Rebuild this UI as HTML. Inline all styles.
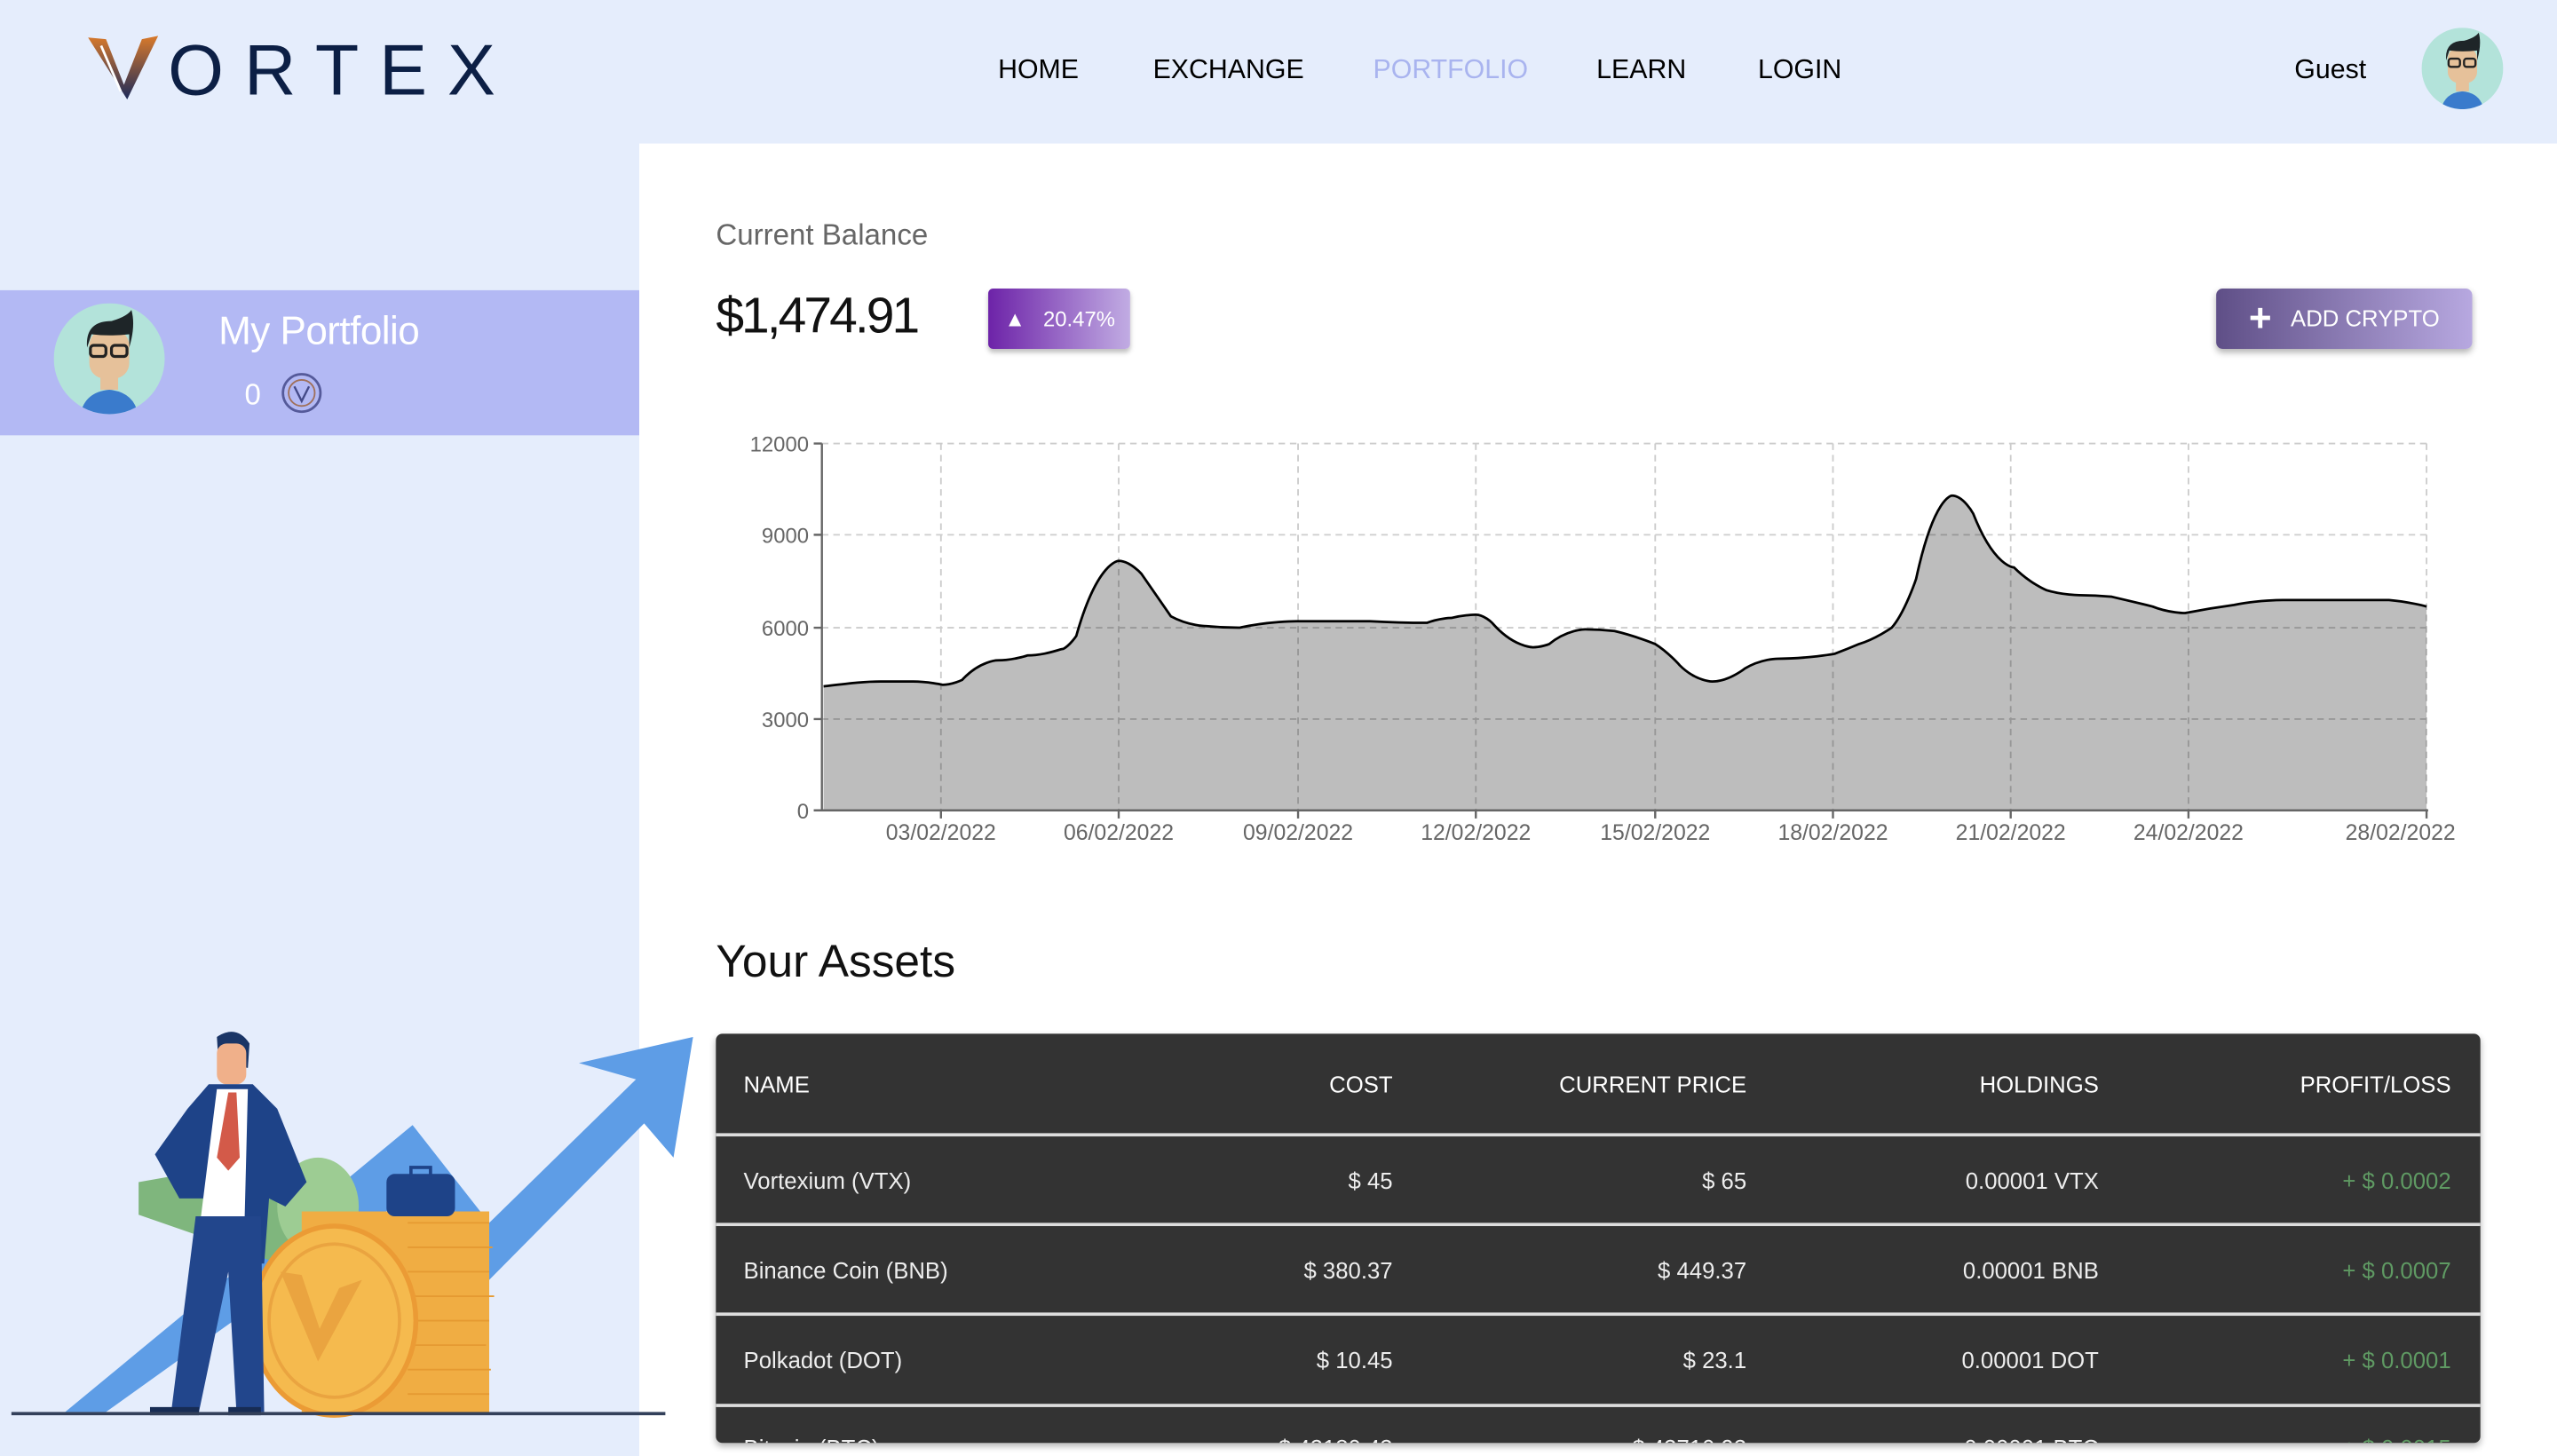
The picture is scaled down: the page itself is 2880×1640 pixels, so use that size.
<!DOCTYPE html>
<html><head><meta charset="utf-8"><style>
*{margin:0;padding:0;box-sizing:border-box}
html,body{width:2880px;height:1640px;overflow:hidden;background:#e5edfc;font-family:"Liberation Sans",sans-serif}
#w{position:absolute;left:0;top:0;width:1568px;height:893px;transform:scale(1.83674,1.83651);transform-origin:0 0;background:#e5edfc}
.a{position:absolute}
.nav{top:34px;font-size:16.5px;color:#000}
.main{left:392px;top:88px;width:1176px;height:805px;background:#fff}
.tb{left:439px;top:634px;width:1082px;height:251px;background:#333;border-radius:4px;overflow:hidden;box-shadow:0 2px 4px rgba(0,0,0,.3)}
.row{position:absolute;left:0;width:1082px;color:#eee;font-size:14px}
.row span{position:absolute;top:50%;transform:translateY(-50%)}
.sep{position:absolute;left:0;width:1082px;height:2px;background:#ddd}
</style></head><body><div id="w">
<svg class="a" style="left:54px;top:20px" width="270" height="44" viewBox="0 0 270 44">
<defs><linearGradient id="lg" x1="0" y1="0" x2="0" y2="1"><stop offset="0" stop-color="#d97a2b"/><stop offset="1" stop-color="#1c2a5a"/></linearGradient></defs>
<path d="M0 3 L11 4 L22 32 L33 4 L43 2 L24 41 Z" fill="url(#lg)"/><path d="M8 8 L20 36" stroke="#fff" stroke-width="1.5" fill="none"/>
<text x="49" y="38" font-family="Liberation Sans" font-size="44" fill="#0c1f45" letter-spacing="12.5">ORTEX</text>
</svg>
<div class="a nav" style="left:612px">HOME</div>
<div class="a nav" style="left:707px">EXCHANGE</div>
<div class="a nav" style="left:842px;color:#a9b4ef">PORTFOLIO</div>
<div class="a nav" style="left:979px">LEARN</div>
<div class="a nav" style="left:1078px">LOGIN</div>
<div class="a nav" style="left:1407px">Guest</div>
<svg class="a" style="left:1485px;top:17px" width="50" height="50" viewBox="0 0 50 50">
<circle cx="25" cy="25" r="25" fill="#b3e3da"/><clipPath id="c1"><circle cx="25" cy="25" r="25"/></clipPath>
<g clip-path="url(#c1)"><path d="M12 50 Q14 40 25 39 Q36 40 38 50Z" fill="#3a7bcc"/><rect x="21" y="30" width="8" height="9" fill="#e6c19a"/>
<rect x="16" y="12" width="18" height="22" rx="7" fill="#e6c19a"/><path d="M15 20 Q14 8 26 8 Q33 6 35 3 Q37 10 34 20 L34 14 Q25 15 17 14Z" fill="#1e2528"/>
<rect x="16.5" y="19" width="7" height="5" rx="1.5" fill="none" stroke="#222" stroke-width="1.3"/><rect x="26" y="19" width="7" height="5" rx="1.5" fill="none" stroke="#222" stroke-width="1.3"/></g></svg>
<div class="a" style="left:0;top:178px;width:392px;height:89px;background:#b3b9f4"></div>
<svg class="a" style="left:33px;top:186px" width="68" height="68" viewBox="0 0 50 50">
<circle cx="25" cy="25" r="25" fill="#b3e3da"/><clipPath id="c2"><circle cx="25" cy="25" r="25"/></clipPath>
<g clip-path="url(#c2)"><path d="M12 50 Q14 40 25 39 Q36 40 38 50Z" fill="#3a7bcc"/><rect x="21" y="30" width="8" height="9" fill="#e6c19a"/>
<rect x="16" y="12" width="18" height="22" rx="7" fill="#e6c19a"/><path d="M15 20 Q14 8 26 8 Q33 6 35 3 Q37 10 34 20 L34 14 Q25 15 17 14Z" fill="#1e2528"/>
<rect x="16.5" y="19" width="7" height="5" rx="1.5" fill="none" stroke="#222" stroke-width="1.3"/><rect x="26" y="19" width="7" height="5" rx="1.5" fill="none" stroke="#222" stroke-width="1.3"/></g></svg>
<div class="a" style="left:134px;top:190px;font-size:24px;color:#fff;letter-spacing:-0.3px">My Portfolio</div>
<div class="a" style="left:150px;top:232px;font-size:18px;color:#fff">0</div>
<svg class="a" style="left:172px;top:228px" width="26" height="26" viewBox="0 0 26 26"><circle cx="13" cy="13" r="11.5" fill="none" stroke="#555a9a" stroke-width="1.5"/><circle cx="13" cy="13" r="8" fill="none" stroke="#a0705a" stroke-width="1"/><path d="M8.5 9 L13 18 L17.5 9" fill="none" stroke="#444a88" stroke-width="1.3"/></svg>
<div class="a main"></div>
<svg class="a" style="left:0;top:600px" width="430" height="293" viewBox="0 0 430 293">
<path d="M40 266 L253 90 L300 150 L390 62 L355 52 L425 36 L413 110 L395 89 L300 185 L255 130 L65 266Z" fill="#5e9de6"/>
<path d="M85 125 L170 110 L200 150 L200 185 L85 145Z" fill="#7fb67d"/><ellipse cx="195" cy="140" rx="25" ry="30" fill="#9dcc93"/>
<rect x="185" y="143" width="115" height="124" fill="#f0ad43"/>
<g stroke="#e59a32" stroke-width="1">
<path d="M250 150H300M250 165H302M250 180H300M250 195H303M250 210H300M250 225H298M250 240H301M250 255H300"/></g>
<ellipse cx="205" cy="210" rx="50" ry="58" fill="#f5ba4e" stroke="#eb9b35" stroke-width="3"/>
<ellipse cx="205" cy="210" rx="40" ry="47" fill="none" stroke="#eaa440" stroke-width="2"/>
<path d="M172 180 L195 235 L222 185 L208 190 L196 215 L185 182Z" fill="#eaa440"/>
<rect x="237" y="120" width="42" height="26" rx="5" fill="#1e4388"/><rect x="252" y="116" width="12" height="6" fill="none" stroke="#1e4388" stroke-width="2"/>
<path d="M133 36 Q145 28 153 40 L152 55 L134 52Z" fill="#1a3566"/><rect x="133" y="40" width="18" height="25" rx="6" fill="#f0b08a"/>
<path d="M115 80 L128 65 L155 65 L170 80 L188 125 L175 140 L165 135 L162 175 L135 175 L128 135 L110 135 L95 108Z" fill="#1e4388"/>
<path d="M133 68 L152 68 L150 148 L123 148Z" fill="#fff"/><path d="M140 70 L145 70 L147 110 L140 118 L133 110Z" fill="#d35a49"/>
<path d="M120 146 L160 146 L162 266 L145 266 L140 180 L122 266 L105 266Z" fill="#22468c"/>
<path d="M92 263 L122 263 L122 268 L92 268Z M140 263 L160 263 L160 268 L140 268Z" fill="#172c54"/>
<rect x="7" y="266" width="401" height="2" fill="#33405a"/>
</svg>
<div class="a" style="left:439px;top:134px;font-size:18px;color:#666">Current Balance</div>
<div class="a" style="left:439px;top:176px;font-size:31px;color:#111;letter-spacing:-1.6px">$1,474.91</div>
<div class="a" style="left:606px;top:177px;width:87px;height:37px;border-radius:3px;background:linear-gradient(90deg,#6d23a8,#c1ace3);box-shadow:0 2px 3px rgba(0,0,0,.25);color:#fff;font-size:13px;line-height:37px;padding-left:10px">&#9650;&nbsp;&nbsp;&nbsp;20.47%</div>
<div class="a" style="left:1359px;top:177px;width:157px;height:37px;border-radius:4px;background:linear-gradient(90deg,#5f4f87,#b7a8e0);box-shadow:0 2px 4px rgba(0,0,0,.3);color:#fff;font-size:14px;line-height:37px;padding-left:20px"><span style="font-size:24px;vertical-align:-3px;font-weight:bold">+</span>&nbsp;&nbsp;&nbsp;ADD CRYPTO</div>
<svg class="a" style="left:440px;top:260px" width="1090" height="270" viewBox="440 260 1090 270">
<g stroke="#ccc" stroke-dasharray="4 3" stroke-width="1">
<path d="M504 272H1488M504 328H1488M504 385H1488M504 441H1488"/>
<path d="M577 272V497M686 272V497M796 272V497M905 272V497M1015 272V497M1124 272V497M1233 272V497M1342 272V497M1488 272V497"/></g>
<path d="M505 421 C522 419 530 418 540 418 C550 418 560 418 560 418 C569 418 578 420 578 420 C584 420 590 417 590 417 C601 405 612 405 612 405 C621 405 630 402 630 402 C641 402 650 398 652 398 C656 396 660 390 660 390 C673 344 686 344 686 344 C693 344 700 352 700 352 C709 365 718 378 718 378 C729 384 740 384 740 384 C750 385 760 385 760 385 C778 381 795 381 795 381 C818 381 840 381 840 381 C858 382 875 382 875 382 C883 379 890 379 890 379 C898 377 905 377 905 377 C910 377 915 382 915 382 C928 397 940 397 940 397 C945 397 950 395 950 395 C961 386 972 386 972 386 C981 386 990 387 990 387 C1003 390 1015 395 1015 395 C1023 400 1030 408 1030 408 C1040 418 1050 418 1050 418 C1060 418 1070 410 1070 410 C1080 404 1090 404 1090 404 C1108 404 1125 401 1125 401 C1133 398 1140 395 1140 395 C1150 392 1160 385 1160 385 C1168 376 1175 355 1175 355 C1186 304 1197 304 1197 304 C1204 304 1210 315 1210 315 C1223 348 1235 348 1235 348 C1245 358 1255 362 1255 362 C1265 365 1275 365 1275 365 C1285 365 1295 366 1295 366 C1308 369 1320 372 1320 372 C1330 376 1340 376 1340 376 C1355 373 1370 371 1370 371 C1385 368 1400 368 1400 368 C1420 368 1440 368 1440 368 C1453 368 1465 368 1465 368 C1477 369 1488 372 1488 372 L1488 497 L505 497Z" fill="#000" fill-opacity=".26" stroke="none"/>
<path d="M505 421 C522 419 530 418 540 418 C550 418 560 418 560 418 C569 418 578 420 578 420 C584 420 590 417 590 417 C601 405 612 405 612 405 C621 405 630 402 630 402 C641 402 650 398 652 398 C656 396 660 390 660 390 C673 344 686 344 686 344 C693 344 700 352 700 352 C709 365 718 378 718 378 C729 384 740 384 740 384 C750 385 760 385 760 385 C778 381 795 381 795 381 C818 381 840 381 840 381 C858 382 875 382 875 382 C883 379 890 379 890 379 C898 377 905 377 905 377 C910 377 915 382 915 382 C928 397 940 397 940 397 C945 397 950 395 950 395 C961 386 972 386 972 386 C981 386 990 387 990 387 C1003 390 1015 395 1015 395 C1023 400 1030 408 1030 408 C1040 418 1050 418 1050 418 C1060 418 1070 410 1070 410 C1080 404 1090 404 1090 404 C1108 404 1125 401 1125 401 C1133 398 1140 395 1140 395 C1150 392 1160 385 1160 385 C1168 376 1175 355 1175 355 C1186 304 1197 304 1197 304 C1204 304 1210 315 1210 315 C1223 348 1235 348 1235 348 C1245 358 1255 362 1255 362 C1265 365 1275 365 1275 365 C1285 365 1295 366 1295 366 C1308 369 1320 372 1320 372 C1330 376 1340 376 1340 376 C1355 373 1370 371 1370 371 C1385 368 1400 368 1400 368 C1420 368 1440 368 1440 368 C1453 368 1465 368 1465 368 C1477 369 1488 372 1488 372" fill="none" stroke="#000" stroke-width="1.5"/>
<path d="M504 272V497H1489M499 272H504M499 328H504M499 385H504M499 441H504M499 497H504M577 497V502M686 497V502M796 497V502M905 497V502M1015 497V502M1124 497V502M1233 497V502M1342 497V502M1488 497V502" stroke="#666" stroke-width="1.3" fill="none"/>
<g font-family="Liberation Sans" font-size="13" fill="#666" text-anchor="end">
<text x="496" y="277">12000</text><text x="496" y="333">9000</text><text x="496" y="390">6000</text><text x="496" y="446">3000</text><text x="496" y="502">0</text></g>
<g font-family="Liberation Sans" font-size="13.5" fill="#666" text-anchor="middle">
<text x="577" y="515">03/02/2022</text><text x="686" y="515">06/02/2022</text><text x="796" y="515">09/02/2022</text><text x="905" y="515">12/02/2022</text><text x="1015" y="515">15/02/2022</text><text x="1124" y="515">18/02/2022</text><text x="1233" y="515">21/02/2022</text><text x="1342" y="515">24/02/2022</text><text x="1472" y="515">28/02/2022</text></g>
</svg>
<div class="a" style="left:439px;top:574px;font-size:28px;color:#111">Your Assets</div>
<div class="a tb">
<div class="row" style="top:0;height:61px;color:#fff"><span style="left:17px">NAME</span><span style="right:667px">COST</span><span style="right:450px">CURRENT PRICE</span><span style="right:234px">HOLDINGS</span><span style="right:18px">PROFIT/LOSS</span></div>
<div class="sep" style="top:61px"></div>
<div class="row" style="top:63px;height:54px"><span style="left:17px">Vortexium (VTX)</span><span style="right:667px">$ 45</span><span style="right:450px">$ 65</span><span style="right:234px">0.00001 VTX</span><span style="right:18px;color:#5f9a63">+ $ 0.0002</span></div>
<div class="sep" style="top:116px"></div>
<div class="row" style="top:118px;height:54px"><span style="left:17px">Binance Coin (BNB)</span><span style="right:667px">$ 380.37</span><span style="right:450px">$ 449.37</span><span style="right:234px">0.00001 BNB</span><span style="right:18px;color:#5f9a63">+ $ 0.0007</span></div>
<div class="sep" style="top:171px"></div>
<div class="row" style="top:173px;height:54px"><span style="left:17px">Polkadot (DOT)</span><span style="right:667px">$ 10.45</span><span style="right:450px">$ 23.1</span><span style="right:234px">0.00001 DOT</span><span style="right:18px;color:#5f9a63">+ $ 0.0001</span></div>
<div class="sep" style="top:227px"></div>
<div class="row" style="top:244px;height:20px"><span style="left:17px">Bitcoin (BTC)</span><span style="right:667px">$ 42180.43</span><span style="right:450px">$ 43710.93</span><span style="right:234px">0.00001 BTC</span><span style="right:18px;color:#5f9a63">+ $ 0.0015</span></div>
</div>
</div></body></html>
